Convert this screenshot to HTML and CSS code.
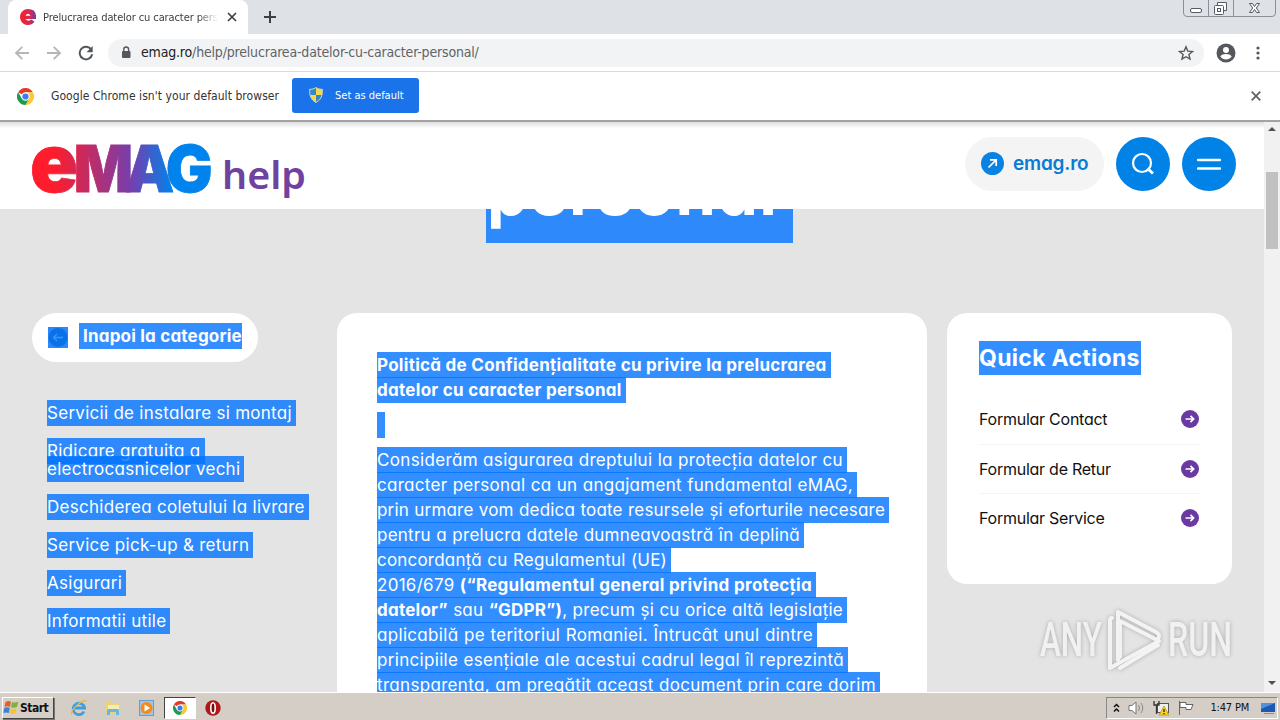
FILE: index.html
```
<!DOCTYPE html>
<html lang="ro">
<head>
  <meta charset="UTF-8">
  <meta name="viewport" content="width=device-width, initial-scale=1.0">
  <title>Prelucrarea datelor cu caracter personal</title>
  <link rel="stylesheet" href="styles.css">
</head>
<body>
  <svg width="0" height="0" class="defs">
    <symbol id="chrome" viewBox="0 0 18 18">
      <path d="M9 9 1.2 4.5A9 9 0 0 1 16.8 4.5H9Z" fill="#e33b2e"/>
      <path d="M16.8 4.5A9 9 0 0 1 9 18L12.9 11.2 9 4.5Z" fill="#fcc934"/>
      <path d="M9 18A9 9 0 0 1 1.2 4.5L5.1 11.2 12.9 11.2Z" fill="#1e9a50"/>
      <circle cx="9" cy="9" r="4.4" fill="#fff"/>
      <circle cx="9" cy="9" r="3.3" fill="#3b7ded"/>
    </symbol>
    <symbol id="go" viewBox="0 0 18 18">
      <circle cx="9" cy="9" r="9" fill="#6a3aa2"/>
      <path d="M4.5 9h8M9.5 5.900 12.600 9l-3.100 3.100" fill="none" stroke="#fff" stroke-width="1.700"/>
    </symbol>
  </svg>

  <div class="tabstrip">
    <div class="tab">
      <svg width="16" height="16" viewBox="0 0 16 16">
        <defs><linearGradient id="fav" gradientUnits="userSpaceOnUse" x1="0" y1="0" x2="16" y2="0"><stop offset="0" stop-color="#f5202d"/><stop offset=".6" stop-color="#d92a50"/><stop offset="1" stop-color="#6a3ea5"/></linearGradient></defs>
        <path d="M8 0a8 8 0 1 0 6.500 12.700L11.500 10.500Q8 13 5.500 10H16Q17 0 8 0zM5.500 6.800q2.500-4 5 0z" fill="url(#fav)"/>
      </svg>
      <span class="tab-title">Prelucrarea datelor cu caracter personal</span>
      <svg width="10" height="10" viewBox="0 0 10 10"><path d="m1 1 8 8M9 1 1 9" stroke="#3c4043" stroke-width="1.7"/></svg>
    </div>
    <svg class="plus" width="12" height="12" viewBox="0 0 12 12"><path d="M6 0v12M0 6h12" stroke="#3c4043" stroke-width="2"/></svg>
    <svg class="win" width="94" height="17" viewBox="0 0 94 17">
      <path d="M.5 0v13q0 3.500 3.500 3.500h85q3.500 0 3.500-3.500V0M25.500 0v16M50.500 0v16" fill="none" stroke="#8b8f97"/>
      <rect x="7.500" y="8.500" width="11" height="4" rx="1.500" fill="#fff" stroke="#555b66"/>
      <path d="M34.500 5.500v-3h9v8h-3" fill="#fff" stroke="#555b66"/>
      <rect x="31.500" y="5.500" width="9" height="9" rx="1" fill="#fff" stroke="#555b66"/>
      <rect x="34.500" y="8.500" width="3" height="3" fill="none" stroke="#555b66"/>
      <path d="M66.500 3.500h3l2 3 2-3h3l-3.200 4.500 3.200 4.500h-3l-2-3-2 3h-3l3.200-4.500z" fill="#fff" stroke="#555b66"/>
    </svg>
  </div>

  <div class="toolbar">
    <svg width="16" height="16" viewBox="0 0 16 16"><path d="M15 8H2.500M8.300 1.800 2 8l6.300 6.200" fill="none" stroke="#b4b6b8" stroke-width="1.800"/></svg>
    <svg width="16" height="16" viewBox="0 0 16 16"><path d="M1 8h12.500M7.700 1.800 14 8l-6.300 6.200" fill="none" stroke="#b4b6b8" stroke-width="1.800"/></svg>
    <svg width="16" height="16" viewBox="0 0 16 16"><path d="M13.300 4.600A6.300 6.300 0 1 0 14.200 9.300" fill="none" stroke="#53575b" stroke-width="2"/><path d="M14.700 1v6.200H8.500z" fill="#53575b"/></svg>
    <div class="omnibox">
      <svg width="10" height="13" viewBox="0 0 10 13"><rect x="1" y="5" width="8.500" height="7" rx="1" fill="#54585d"/><path d="M2.800 5.500V3.400a2.400 2.400 0 0 1 4.800 0v2.100" fill="none" stroke="#54585d" stroke-width="1.400"/></svg>
      <span class="url"><b>emag.ro</b>/help/prelucrarea-datelor-cu-caracter-personal/</span>
      <svg width="16" height="16" viewBox="0 0 16 16"><path d="m8 1.800 1.800 4.300 4.700.4-3.600 3 1.100 4.600L8 11.700 4 14.100l1.100-4.600-3.600-3 4.700-.4z" fill="none" stroke="#54585d" stroke-width="1.400"/></svg>
    </div>
    <svg class="user" width="20" height="20" viewBox="0 0 20 20"><circle cx="10" cy="10" r="9.500" fill="#54585d"/><circle cx="10" cy="7" r="3" fill="#fff"/><path d="M4.300 13.500c1.500-3.300 9.900-3.300 11.400 0-2.600 4-8.800 4-11.400 0z" fill="#fff"/></svg>
    <svg width="4" height="14" viewBox="0 0 4 14" fill="#54585d"><circle cx="2" cy="2" r="1.600"/><circle cx="2" cy="7" r="1.600"/><circle cx="2" cy="12" r="1.600"/></svg>
  </div>

  <div class="infobar">
    <svg width="17" height="17"><use href="#chrome"/></svg>
    <span class="info-text">Google Chrome isn't your default browser</span>
    <div class="default-btn">
      <svg width="14" height="16" viewBox="0 0 14 16">
        <path d="M7 .5C5 2 3 2.300.7 2.300.4 8 1.500 12.500 7 15.500c5.500-3 6.600-7.500 6.300-13.200C11 2.300 9 2 7 .5z" fill="#f5d949"/>
        <path d="M7 .5C5 2 3 2.300.7 2.300V8H7zM7 8h6.200c-.5 3.500-2.400 5.800-6.200 7.500z" fill="#3487c9"/>
        <path d="M7 .5C5 2 3 2.300.7 2.300.4 8 1.500 12.500 7 15.500c5.500-3 6.600-7.500 6.300-13.200C11 2.300 9 2 7 .5z" fill="none" stroke="#cfd3c9"/>
      </svg>
      <span>Set as default</span>
    </div>
    <svg class="info-close" width="10" height="10" viewBox="0 0 10 10"><path d="m.7.7 8.600 8.600M9.300.7.7 9.300" stroke="#5f6368" stroke-width="1.800"/></svg>
  </div>

  <div class="viewport">
    <div class="page">
      <header class="site-header">
        <svg class="logo" width="280" height="62" viewBox="0 0 280 62">
          <defs>
            <linearGradient id="brand" gradientUnits="userSpaceOnUse" x1="0" y1="0" x2="186" y2="0">
              <stop offset=".12" stop-color="#ff1c2c"/><stop offset=".55" stop-color="#753fad"/><stop offset=".78" stop-color="#0083ec"/>
            </linearGradient>
          </defs>
          <text class="logo-emag" x="-2 43 96 138" y="55" transform="scale(.97 1)" fill="url(#brand)" stroke="url(#brand)"><tspan class="logo-e">e</tspan>MAG</text>
          <text class="logo-help" x="190" y="52" textLength="84" lengthAdjust="spacingAndGlyphs">help</text>
        </svg>
        <div class="shop-link">
          <svg width="23" height="23" viewBox="0 0 23 23"><circle cx="11.500" cy="11.500" r="11.500" fill="#0a82e2"/><path d="m7.500 15.500 7.500-7.500M9 7.800h6.200V14" fill="none" stroke="#fff" stroke-width="1.700"/></svg>
          <span>emag.ro</span>
        </div>
        <div class="round-btn">
          <svg width="24" height="24" viewBox="0 0 24 24"><circle cx="11" cy="11" r="9" fill="none" stroke="#fff" stroke-width="2.200"/><path d="m16.500 16.500 5.500 5" stroke="#fff" stroke-width="3"/></svg>
        </div>
        <div class="round-btn">
          <svg width="24" height="12" viewBox="0 0 24 12"><path d="M1 2h22M1 10.500h22" stroke="#fff" stroke-width="2.400" stroke-linecap="round"/></svg>
        </div>
      </header>

      <div class="hero"><h1 class="sel">personal</h1></div>

      <div class="columns">
        <nav class="side">
          <div class="back">
            <svg width="20" height="21" viewBox="0 0 20 21"><rect width="20" height="21" fill="#2b87fb"/><circle cx="10" cy="10.500" r="9.500" fill="#0a72e8"/><path d="M15 10.500H5.500M9 7l-3.500 3.500L9 14" fill="none" stroke="#3a94fb" stroke-width="1.300"/></svg>
            <span class="sel back-text">Inapoi la categorie</span>
          </div>
          <ul class="side-list">
            <li><span class="sel">Servicii de instalare si montaj</span></li>
            <li><span class="sel">Ridicare gratuita a</span><br><span class="sel">electrocasnicelor vechi</span></li>
            <li><span class="sel">Deschiderea coletului la livrare</span></li>
            <li><span class="sel">Service pick-up &amp; return</span></li>
            <li><span class="sel">Asigurari</span></li>
            <li><span class="sel">Informatii utile</span></li>
          </ul>
        </nav>

        <article class="card article">
          <p class="strong"><span class="sel">Politică de Confidențialitate cu privire la prelucrarea</span><br>
            <span class="sel">datelor cu caracter personal</span></p>
          <p><span class="sel empty"></span></p>
          <p class="intro"><span class="sel">Considerăm asigurarea dreptului la protecția datelor cu</span><br>
            <span class="sel">caracter personal ca un angajament fundamental eMAG,</span><br>
            <span class="sel">prin urmare vom dedica toate resursele și eforturile necesare</span><br>
            <span class="sel">pentru a prelucra datele dumneavoastră în deplină</span><br>
            <span class="sel">concordanță cu Regulamentul (UE)</span><br>
            <span class="sel">2016/679 <b>(“Regulamentul general privind protecția</b></span><br>
            <span class="sel"><b>datelor”</b> sau <b>“GDPR”)</b>, precum și cu orice altă legislație</span><br>
            <span class="sel">aplicabilă pe teritoriul Romaniei. Întrucât unul dintre</span><br>
            <span class="sel">principiile esențiale ale acestui cadrul legal îl reprezintă</span><br>
            <span class="sel">transparența, am pregătit aceast document prin care dorim</span></p>
        </article>

        <aside class="card quick">
          <h2 class="sel">Quick Actions</h2>
          <div class="action"><span>Formular Contact</span><svg width="18" height="18"><use href="#go"/></svg></div>
          <div class="action"><span>Formular de Retur</span><svg width="18" height="18"><use href="#go"/></svg></div>
          <div class="action"><span>Formular Service</span><svg width="18" height="18"><use href="#go"/></svg></div>
        </aside>
      </div>

      <svg class="watermark" width="200" height="70" viewBox="0 0 200 70">
        <g class="wm-text">
          <text x="5" y="52" textLength="62" lengthAdjust="spacingAndGlyphs">ANY</text>
          <text x="133" y="52" textLength="64" lengthAdjust="spacingAndGlyphs">RUN</text>
        </g>
        <g class="wm-play">
          <path d="M83 56V8L121 28q5 3 2 7"/>
          <path d="M77 14q-2 0-2 3v47L124 37 85 17v36"/>
          <path d="m85 64 38-23"/>
        </g>
      </svg>
    </div>

    <div class="scrollbar">
      <svg width="8" height="4" viewBox="0 0 8 4"><path d="m0 4 4-4 4 4z" fill="#505050"/></svg>
      <div class="thumb"></div>
      <svg width="8" height="4" viewBox="0 0 8 4"><path d="m0 0 4 4 4-4z" fill="#505050"/></svg>
    </div>
  </div>

  <div class="taskbar">
    <div class="start">
      <svg width="16" height="15" viewBox="0 0 16 15">
        <path d="M2.500 2q3-1.800 5.500-.2L7 7Q4.500 5.600 1.500 7z" fill="#e4622a"/>
        <path d="M9 2q3 1.300 6.500-.2L14 7q-3 1.500-6 .2z" fill="#7fb241"/>
        <path d="M1.300 8q3-1.500 5.500 0l-1 5Q3 12 .3 13z" fill="#3c83cf"/>
        <path d="M7.800 8.300q3 1.300 6 0l-1.300 5q-3 1.200-5.800 0z" fill="#f6c33c"/>
      </svg>
      <span>Start</span>
    </div>
    <div class="launch">
      <svg width="18" height="18" viewBox="0 0 18 18"><path d="M14 12.500A5.700 5.700 0 1 1 14.500 9H5" fill="none" stroke="#3f9edb" stroke-width="2.800"/><path d="M2 15.500C-1 12 13-1 16.500 2.500" fill="none" stroke="#e7bd3d" stroke-width="1.300"/></svg>
      <svg width="18" height="18" viewBox="0 0 18 18"><path d="M2 3h5l1 2h8v10H2z" fill="#e9d47c"/><path d="M4 6h11v4H4z" fill="#f6ebb2"/><path d="M3 16v-4q0-2 2-2h8q2 0 2 2v4h-3v-3H6v3z" fill="#69b6e0"/></svg>
      <svg width="18" height="18" viewBox="0 0 18 18"><rect x="1.500" y="1.500" width="14" height="15" fill="#9dc6ea" stroke="#6a9cc9"/><circle cx="8.500" cy="9" r="6" fill="#f28b1d"/><path d="m6.500 5.500 5.500 3.500-5.500 3.500z" fill="#fff"/></svg>
      <div class="running"><svg width="14" height="14"><use href="#chrome"/></svg></div>
      <svg width="18" height="18" viewBox="0 0 18 18"><circle cx="9" cy="9" r="7.700" fill="#b01818"/><ellipse cx="9" cy="9" rx="2.200" ry="5.200" fill="#701010" stroke="#fff" stroke-width="1.600"/></svg>
    </div>
    <div class="tray">
      <svg width="7" height="10" viewBox="0 0 7 10"><path d="m1 4 2.500-2.500L6 4M1 8.500 3.500 6 6 8.500" fill="none" stroke="#111" stroke-width="1.500"/></svg>
      <svg width="17" height="16" viewBox="0 0 17 16"><path d="M1 5.500h3L8 2v12l-4-3.500H1z" fill="#fff" stroke="#777"/><path d="M10.500 5q2 3 0 6M13 3q3.500 5 0 10" fill="none" stroke="#888"/></svg>
      <svg width="17" height="16" viewBox="0 0 17 16"><rect x="4.500" y="3.500" width="11" height="9" fill="#eee" stroke="#555"/><path d="M1 1v4h5V1M3.500 5v9" fill="none" stroke="#333" stroke-width="1.300"/><path d="m11 6 5 9H6z" fill="#f8d12c" stroke="#a98a10" stroke-width=".6"/><path d="M11 9v3M11 13v1.200" stroke="#222" stroke-width="1.300"/></svg>
      <svg width="17" height="16" viewBox="0 0 17 16"><path d="M1.500 1v14M2 2.500h6v2h7l-2 5H8v-2H2z" fill="#fff" stroke="#666"/></svg>
      <span class="clock">1:47 PM</span>
      <svg width="16" height="14" viewBox="0 0 16 14"><path d="M1 2h14v9H1z" fill="#1c59b5"/><path d="M1 2h14L1 8z" fill="#4f93dd"/><path d="M4 12.500h10" stroke="#7f8da5"/></svg>
    </div>
  </div>
</body>
</html>
```
FILE: styles.css
```
* { box-sizing: border-box; }
body {
  margin: 0;
  width: 1280px;
  height: 720px;
  overflow: hidden;
  display: flex;
  flex-direction: column;
  background-color: #fff;
  font-family: "DejaVu Sans Condensed", "DejaVu Sans", sans-serif;
  color: #111;
}
svg { display: block; flex: none; }
.defs { position: absolute; }

/* browser */
.tabstrip {
  display: flex;
  height: 34px;
  flex: none;
  background-color: #dee1e6;
}
.tab {
  display: flex;
  align-items: center;
  width: 240px;
  margin-left: 8px;
  padding: 0 11px 0 12px;
  background-color: #fff;
  border-radius: 8px 8px 0 0;
}
.tab-title {
  width: 175px;
  margin: 0 9px 0 7px;
  overflow: hidden;
  white-space: nowrap;
  font-size: 11px;
  letter-spacing: -0.1px;
  color: #3c4043;
  mask-image: linear-gradient(to right, #000 155px, transparent);
}
.plus { margin: 11px 0 0 16px; }
.win { margin: 0 3px 0 auto; }
.toolbar {
  display: flex;
  align-items: center;
  height: 38px;
  flex: none;
  padding: 0 20px 0 14px;
  gap: 16px;
  border-bottom: 1px solid #d9dadc;
}
.omnibox {
  display: flex;
  align-items: center;
  flex: 1;
  height: 28px;
  margin-left: -2px;
  padding: 0 10px 0 13px;
  border-radius: 14px;
  background-color: #f1f3f4;
}
.url {
  flex: 1;
  margin: -2px 0 0 10px;
  font-size: 14px;
  letter-spacing: -0.18px;
  color: #5f6368;
}
.url b { font-weight: normal; color: #202124; }
.user { margin: 0 4px 0 -4px; }
.infobar {
  display: flex;
  align-items: center;
  height: 48px;
  flex: none;
  padding: 0 19px 0 17px;
}
.info-text {
  width: 241px;
  margin-left: 17px;
  font-size: 12px;
  letter-spacing: 0.06px;
  white-space: nowrap;
  color: #333;
}
.default-btn {
  display: flex;
  align-items: center;
  width: 127px;
  height: 35px;
  margin-bottom: 2px;
  padding-left: 17px;
  gap: 12px;
  border-radius: 3px;
  background-color: #1a73e8;
  color: #fff;
  font-size: 11px;
}
.info-close { margin-left: auto; }

/* page */
.viewport {
  display: flex;
  height: 572px;
  flex: none;
  border-top: 2px solid #a3a3a3;
}
.page {
  position: relative;
  width: 1264px;
  overflow: hidden;
  background-color: #e4e4e4;
  font-family: Inter, "Open Sans", sans-serif;
  font-feature-settings: "cv11";
}
.site-header {
  display: flex;
  align-items: center;
  height: 87px;
  padding: 0 28px 4px 32px;
  gap: 12px;
  background: linear-gradient(#ddd, #fff 6px);
}
.logo { margin: 8px auto 0 0; overflow: visible; }
.logo-emag {
  font-family: Inter, sans-serif;
  font-size: 64px;
  font-weight: 900;
  stroke-width: 0.8px;
}
.logo-e { font-size: 82px; }
.logo-help {
  font-family: "Noto Sans", sans-serif;
  font-size: 37px;
  font-weight: 600;
  fill: #70429f;
}
.shop-link {
  display: flex;
  align-items: center;
  width: 139px;
  height: 54px;
  padding-left: 16px;
  gap: 9px;
  border-radius: 27px;
  background-color: #f4f4f4;
  color: #0a7bd3;
  font-size: 19px;
  font-weight: 600;
  letter-spacing: -0.2px;
}
.round-btn {
  display: flex;
  align-items: center;
  justify-content: center;
  width: 54px;
  height: 54px;
  border-radius: 50%;
  background-color: #0082e6;
}
.sel {
  display: inline-block;
  height: 26px;
  line-height: 26px;
  white-space: nowrap;
  background-color: rgba(0, 115, 255, 0.8);
  color: #fff;
}
.hero {
  display: flex;
  justify-content: center;
  align-items: flex-end;
  height: 104px;
  padding: 0 0 70px 15px;
  overflow: hidden;
}
.hero h1 {
  flex: none;
  width: 307px;
  height: 72px;
  margin: 0;
  padding-left: 1px;
  line-height: 42px;
  font-size: 65px;
  font-weight: 700;
  letter-spacing: 1.2px;
}
.columns {
  display: flex;
  align-items: flex-start;
  gap: 20px;
  padding: 0 32px;
}
.side { width: 285px; }
.back {
  display: flex;
  align-items: center;
  width: 226px;
  height: 49px;
  padding: 0 16px;
  gap: 11px;
  border-radius: 25px;
  background-color: #fff;
}
.back-text {
  width: 163px;
  margin-bottom: 3px;
  padding-left: 4px;
  font-size: 17px;
  font-weight: 700;
  letter-spacing: 0.2px;
}
.side-list {
  margin: 42px 0 0 15px;
  padding: 0;
  list-style: none;
  font-size: 17px;
  line-height: 18px;
  letter-spacing: 0.28px;
}
.side-list li { margin-bottom: 20px; }
.side-list .sel { margin: -4px 0; padding-right: 4px; vertical-align: top; }
.card {
  border-radius: 20px;
  background-color: #fff;
}
.article {
  width: 590px;
  height: 500px;
  padding: 40px;
  font-size: 17px;
  line-height: 25px;
  letter-spacing: 0.28px;
}
.article p { margin: 0 0 10px; }
.article .sel { margin-top: -1px; padding-right: 4px; vertical-align: top; }
.article .empty { width: 8px; padding: 0; }
.article .strong { font-weight: 700; }
/* each selected line keeps its own measure */
.intro .sel { text-align-last: justify; }
.intro .sel:nth-of-type(1) { width: 470px; letter-spacing: 0.34px; }
.intro .sel:nth-of-type(2) { width: 480px; }
.intro .sel:nth-of-type(3) { width: 512px; letter-spacing: 0.2px; }
.intro .sel:nth-of-type(4) { width: 427px; letter-spacing: 0.24px; }
.intro .sel:nth-of-type(5) { width: 294px; letter-spacing: 0.2px; }
.intro .sel:nth-of-type(6) { width: 439px; }
.intro .sel:nth-of-type(7) { width: 470px; letter-spacing: 0.24px; }
.intro .sel:nth-of-type(8) { width: 440px; letter-spacing: 0.32px; }
.intro .sel:nth-of-type(9) { width: 471px; letter-spacing: 0.32px; }
.intro .sel:nth-of-type(10) { width: 503px; letter-spacing: 0.32px; }
.quick {
  width: 285px;
  height: 271px;
  padding: 28px 32px;
}
.quick h2 {
  width: 162px;
  height: 34px;
  margin: 0 0 20px;
  line-height: 34px;
  font-size: 23px;
  letter-spacing: 0.3px;
}
.action {
  display: flex;
  justify-content: space-between;
  align-items: center;
  height: 49px;
  padding: 0 1px 1px 0;
  font-size: 16px;
  letter-spacing: -0.25px;
}
.action + .action { border-top: 1px solid #f4f4f4; }
.watermark {
  position: absolute;
  left: 1035px;
  top: 482px;
  filter: drop-shadow(0 0 2px rgba(0, 0, 0, 0.25));
}
.wm-text {
  font-family: Roboto, sans-serif;
  font-size: 49px;
  font-weight: 500;
  fill: #f1f1f1;
}
.wm-play {
  fill: none;
  stroke: #f3f3f3;
  stroke-width: 4;
  stroke-linecap: round;
  stroke-linejoin: round;
}
.scrollbar {
  display: flex;
  flex-direction: column;
  align-items: center;
  width: 16px;
  padding: 5px 0 7px;
  background-color: #f1f1f1;
}
.thumb {
  width: 12px;
  height: 77px;
  margin: 41px 0 auto;
  background-color: #c1c1c1;
}

/* windows taskbar */
.taskbar {
  display: flex;
  align-items: center;
  height: 28px;
  flex: none;
  padding: 2px 2px 0;
  border-top: 1px solid #fff;
  background-color: #d5cec6;
}
.start {
  display: flex;
  align-items: center;
  width: 52px;
  height: 22px;
  gap: 1px;
  border: 1px solid;
  border-color: #fff #444 #444 #fff;
  box-shadow: 1px 1px 0 #777;
  font-size: 12px;
  font-weight: bold;
  letter-spacing: -0.5px;
}
.launch {
  display: flex;
  align-items: center;
  margin-left: 16px;
  gap: 16px;
}
.running {
  display: flex;
  align-items: center;
  justify-content: center;
  width: 32px;
  height: 22px;
  margin: 0 -8px;
  border: 1px solid;
  border-color: #444 #fff #fff #444;
  background-color: #fff;
}
.tray {
  display: flex;
  align-items: center;
  width: 172px;
  height: 22px;
  margin-left: auto;
  padding: 0 1px 0 6px;
  gap: 8px;
  border: 1px solid;
  border-color: #888 #fff #fff #888;
}
.clock {
  flex: 1;
  font-size: 11px;
  letter-spacing: -0.2px;
  text-align: right;
  white-space: nowrap;
  padding-right: 3px;
}
```
